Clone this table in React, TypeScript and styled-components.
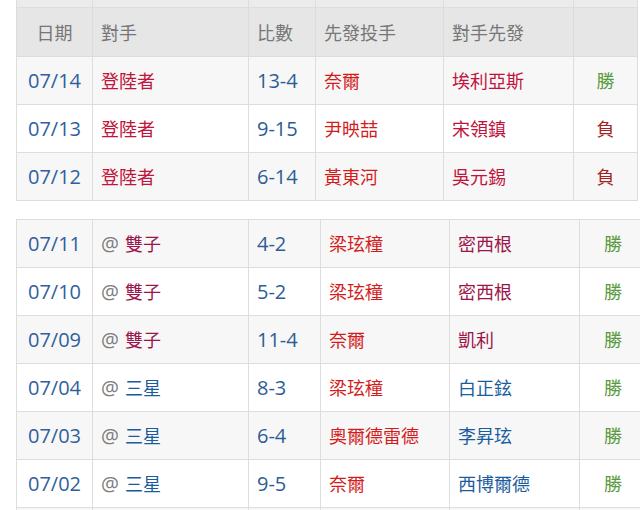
import React from 'react'
import styled, { createGlobalStyle } from 'styled-components'

const Global = createGlobalStyle`
  html, body {
    margin: 0;
    padding: 0;
    background: #fff;
    overflow: hidden;
  }
  body {
    font-family: 'Open Sans', 'Noto Sans CJK TC', sans-serif;
  }
`

const Page = styled.div`
  width: 640px;
  height: 510px;
  overflow: hidden;
  padding-left: 16px;
  box-sizing: border-box;
  display: flex;
  flex-direction: column;
  gap: 18px;
`

const Table = styled.table<{ wide?: boolean }>`
  border-collapse: collapse;
  table-layout: fixed;
  width: ${(p) => (p.wide ? '630px' : '621px')};
  font-size: 18px;
  flex-shrink: 0;
`

const Col = styled.col<{ w: number }>`
  width: ${(p) => p.w}px;
`

const StripRow = styled.tr`
  height: 7px;
  background: #ececec;

  td {
    border: 1px solid #dddddd;
    border-top: none;
    padding: 0;
  }
`

const HeadCell = styled.th<{ center?: boolean }>`
  height: 48px;
  padding: 0 8px;
  background: #e6e6e6;
  border: 1px solid #dcdcdc;
  color: #777777;
  font-weight: normal;
  text-align: ${(p) => (p.center ? 'center' : 'left')};
  white-space: nowrap;
`

const Row = styled.tr<{ shade?: boolean }>`
  height: 48px;
  background: ${(p) => (p.shade ? '#f7f7f7' : '#ffffff')};
`

const Cell = styled.td<{ color?: string; center?: boolean }>`
  padding: 0 8px;
  border: 1px solid #dddddd;
  color: ${(p) => p.color || '#333'};
  text-align: ${(p) => (p.center ? 'center' : 'left')};
  white-space: nowrap;
  overflow: hidden;
`

const Num = styled.span`
  font-size: 20px;
`

const At = styled.span`
  color: #7d7d7d;
  font-size: 20px;
  margin-right: 6px;
`

const C = {
  date: '#2f5f9e',
  score: '#2d5d96',
  pitcher: '#d41c1c',
  mariners: '#c0143c',
  twins: '#9c1449',
  samsung: '#1b5c9e',
  win: '#5a9a3c',
  loss: '#a52222',
}

type Game = {
  date: string
  away: boolean
  opp: string
  oppColor: string
  score: string
  starter: string
  oppStarter: string
  win: boolean
}

const first: Game[] = [
  { date: '07/14', away: false, opp: '登陸者', oppColor: C.mariners, score: '13-4', starter: '奈爾', oppStarter: '埃利亞斯', win: true },
  { date: '07/13', away: false, opp: '登陸者', oppColor: C.mariners, score: '9-15', starter: '尹映喆', oppStarter: '宋領鎮', win: false },
  { date: '07/12', away: false, opp: '登陸者', oppColor: C.mariners, score: '6-14', starter: '黃東河', oppStarter: '吳元錫', win: false },
]

const second: Game[] = [
  { date: '07/11', away: true, opp: '雙子', oppColor: C.twins, score: '4-2', starter: '梁玹穜', oppStarter: '密西根', win: true },
  { date: '07/10', away: true, opp: '雙子', oppColor: C.twins, score: '5-2', starter: '梁玹穜', oppStarter: '密西根', win: true },
  { date: '07/09', away: true, opp: '雙子', oppColor: C.twins, score: '11-4', starter: '奈爾', oppStarter: '凱利', win: true },
  { date: '07/04', away: true, opp: '三星', oppColor: C.samsung, score: '8-3', starter: '梁玹穜', oppStarter: '白正鉉', win: true },
  { date: '07/03', away: true, opp: '三星', oppColor: C.samsung, score: '6-4', starter: '奧爾德雷德', oppStarter: '李昇玹', win: true },
  { date: '07/02', away: true, opp: '三星', oppColor: C.samsung, score: '9-5', starter: '奈爾', oppStarter: '西博爾德', win: true },
]

const GameRow = ({ g, shade }: { g: Game; shade: boolean }) => (
  <Row shade={shade}>
    <Cell color={C.date} center>
      <Num>{g.date}</Num>
    </Cell>
    <Cell color={g.oppColor}>
      {g.away && <At>@</At>}
      {g.opp}
    </Cell>
    <Cell color={C.score}>
      <Num>{g.score}</Num>
    </Cell>
    <Cell color={C.pitcher}>{g.starter}</Cell>
    <Cell color={g.oppColor}>{g.oppStarter}</Cell>
    <Cell color={g.win ? C.win : C.loss} center>
      {g.win ? '勝' : '負'}
    </Cell>
  </Row>
)

const EmptyRow = ({ shade }: { shade: boolean }) => (
  <Row shade={shade}>
    <Cell />
    <Cell />
    <Cell />
    <Cell />
    <Cell />
    <Cell />
  </Row>
)

export default function App() {
  return (
    <>
      <Global />
      <Page>
        <Table>
          <colgroup>
            <Col w={76} />
            <Col w={156} />
            <Col w={67} />
            <Col w={128} />
            <Col w={130} />
            <Col w={64} />
          </colgroup>
          <thead>
            <StripRow>
              <td />
              <td />
              <td />
              <td />
              <td />
              <td />
            </StripRow>
            <tr>
              <HeadCell center>日期</HeadCell>
              <HeadCell>對手</HeadCell>
              <HeadCell>比數</HeadCell>
              <HeadCell>先發投手</HeadCell>
              <HeadCell>對手先發</HeadCell>
              <HeadCell />
            </tr>
          </thead>
          <tbody>
            {first.map((g, i) => (
              <GameRow key={g.date} g={g} shade={i % 2 === 0} />
            ))}
          </tbody>
        </Table>
        <Table wide>
          <colgroup>
            <Col w={76} />
            <Col w={156} />
            <Col w={72} />
            <Col w={129} />
            <Col w={130} />
            <Col w={67} />
          </colgroup>
          <tbody>
            {second.map((g, i) => (
              <GameRow key={g.date} g={g} shade={i % 2 === 0} />
            ))}
            <EmptyRow shade />
          </tbody>
        </Table>
      </Page>
    </>
  )
}
